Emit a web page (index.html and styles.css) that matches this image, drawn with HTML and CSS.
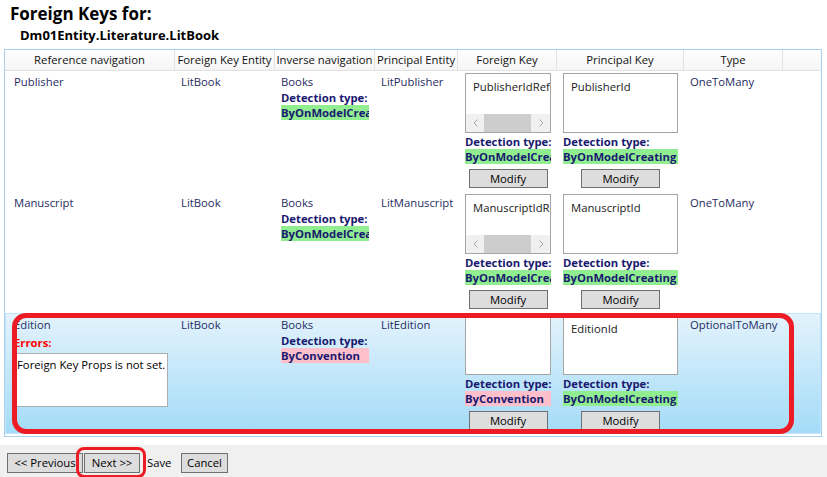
FILE: index.html
```html
<!DOCTYPE html>
<html>
<head>
<meta charset="utf-8">
<link rel="stylesheet" href="styles.css">
</head>
<body>
<div class="titles">
  <h1 class="title">Foreign Keys for:</h1>
  <h2 class="subtitle">Dm01Entity.Literature.LitBook</h2>
</div>
<div class="grid">
  <div class="cols hdr">
    <div>Reference navigation</div>
    <div>Foreign Key Entity</div>
    <div>Inverse navigation</div>
    <div>Principal Entity</div>
    <div>Foreign Key</div>
    <div>Principal Key</div>
    <div>Type</div>
    <div></div>
  </div>

  <div class="cols row">
    <div class="cell first">Publisher</div>
    <div class="cell">LitBook</div>
    <div class="cell inv">
      <div>Books</div>
      <div class="det">Detection type:</div>
      <div class="val green w-inv">ByOnModelCreating</div>
    </div>
    <div class="cell">LitPublisher</div>
    <div class="cell key fk">
      <div class="keywrap w-fk">
        <div class="listbox">
          <div class="item">PublisherIdRef</div>
          <div class="hscroll"><span class="arr"><svg width="5" height="8" viewBox="0 0 5 8"><path d="M4.5 0.5 L1 4 L4.5 7.5" fill="none" stroke="#a6a6a6" stroke-width="1"/></svg></span><span class="thumb"></span><span class="spacer"></span><span class="arr"><svg width="5" height="8" viewBox="0 0 5 8"><path d="M0.5 0.5 L4 4 L0.5 7.5" fill="none" stroke="#a6a6a6" stroke-width="1"/></svg></span></div>
        </div>
        <div class="det">Detection type:</div>
        <div class="val green">ByOnModelCreating</div>
        <button class="btn">Modify</button>
      </div>
    </div>
    <div class="cell key pk">
      <div class="keywrap w-pk">
        <div class="listbox">
          <div class="item">PublisherId</div>
        </div>
        <div class="det">Detection type:</div>
        <div class="val green">ByOnModelCreating</div>
        <button class="btn">Modify</button>
      </div>
    </div>
    <div class="cell">OneToMany</div>
    <div class="cell"></div>
  </div>

  <div class="cols row">
    <div class="cell first">Manuscript</div>
    <div class="cell">LitBook</div>
    <div class="cell inv">
      <div>Books</div>
      <div class="det">Detection type:</div>
      <div class="val green w-inv">ByOnModelCreating</div>
    </div>
    <div class="cell">LitManuscript</div>
    <div class="cell key fk">
      <div class="keywrap w-fk">
        <div class="listbox">
          <div class="item">ManuscriptIdRef</div>
          <div class="hscroll"><span class="arr"><svg width="5" height="8" viewBox="0 0 5 8"><path d="M4.5 0.5 L1 4 L4.5 7.5" fill="none" stroke="#a6a6a6" stroke-width="1"/></svg></span><span class="thumb"></span><span class="spacer"></span><span class="arr"><svg width="5" height="8" viewBox="0 0 5 8"><path d="M0.5 0.5 L4 4 L0.5 7.5" fill="none" stroke="#a6a6a6" stroke-width="1"/></svg></span></div>
        </div>
        <div class="det">Detection type:</div>
        <div class="val green">ByOnModelCreating</div>
        <button class="btn">Modify</button>
      </div>
    </div>
    <div class="cell key pk">
      <div class="keywrap w-pk">
        <div class="listbox">
          <div class="item">ManuscriptId</div>
        </div>
        <div class="det">Detection type:</div>
        <div class="val green">ByOnModelCreating</div>
        <button class="btn">Modify</button>
      </div>
    </div>
    <div class="cell">OneToMany</div>
    <div class="cell"></div>
  </div>

  <div class="cols row sel">
    <div class="cell first">
      <div>Edition</div>
      <div class="errors">Errors:</div>
      <div class="errbox">Foreign Key Props is not set.</div>
    </div>
    <div class="cell">LitBook</div>
    <div class="cell inv">
      <div>Books</div>
      <div class="det">Detection type:</div>
      <div class="val pink w-inv">ByConvention</div>
    </div>
    <div class="cell">LitEdition</div>
    <div class="cell key fk">
      <div class="keywrap w-fk">
        <div class="listbox"></div>
        <div class="det">Detection type:</div>
        <div class="val pink">ByConvention</div>
        <button class="btn">Modify</button>
      </div>
    </div>
    <div class="cell key pk">
      <div class="keywrap w-pk">
        <div class="listbox">
          <div class="item">EditionId</div>
        </div>
        <div class="det">Detection type:</div>
        <div class="val green">ByOnModelCreating</div>
        <button class="btn">Modify</button>
      </div>
    </div>
    <div class="cell">OptionalToMany</div>
    <div class="cell"></div>
  </div>
</div>

<div class="footer">
  <button class="fbtn prev">&lt;&lt; Previous</button>
  <button class="fbtn next">Next &gt;&gt;</button>
  <span class="save">Save</span>
  <button class="fbtn cancel">Cancel</button>
</div>

<div class="mark mark-row"></div>
<div class="mark mark-next"></div>
</body>
</html>
```

FILE: styles.css
```css
* { box-sizing: border-box; }
html, body { margin: 0; padding: 0; }
body {
  width: 827px;
  height: 477px;
  overflow: hidden;
  position: relative;
  background: #fff;
  font-family: "Open Sans", "Noto Sans", sans-serif;
  font-size: 11.3px;
  color: #1f2c63;
}
.titles { height: 49px; padding: 2px 0 0 10px; color: #000; }
.title { margin: 0; font-size: 17px; font-weight: 700; line-height: 23px; }
.subtitle { margin: 0 0 0 10px; font-size: 13px; font-weight: 700; line-height: 20px; }

.grid {
  margin-left: 4px;
  width: 818px;
  border: 1px solid #a9cfea;
  padding-bottom: 2px;
}
.cols {
  display: grid;
  grid-template-columns: 170px 100px 100px 83px 99px 127px 99px 1fr;
}
.hdr {
  height: 21px;
  border-bottom: 1px solid #e2e2e2;
  background: linear-gradient(#ffffff, #f5f5f5);
  color: #111;
}
.hdr > div {
  border-right: 1px solid #e2e2e2;
  text-align: center;
  line-height: 20px;
  white-space: nowrap;
  overflow: hidden;
}
.hdr > div:last-child { border-right: 0; }

.row { height: 121px; }
.row.sel {
  background: linear-gradient(#e3f3fc, #a3dbf8);
  box-shadow: inset 0 0 0 1px #c3e5f9;
}
.cell {
  padding: 3px 0 0 6px;
  line-height: 16px;
  white-space: nowrap;
  overflow: hidden;
  min-width: 0;
}
.cell.first { padding-left: 9px; }
.row.sel .cell { padding-top: 4px; }
.row.sel .cell.key { padding-top: 2px; }
.cell.key { padding: 2px 0 0 6px; }
.cell.fk { padding-left: 7px; }

.keywrap { display: flex; flex-direction: column; }
.w-fk { width: 86px; }
.w-pk { width: 115px; }
.w-inv { width: 88px; }

.listbox {
  height: 60px;
  border: 1px solid #a6a6a6;
  background: #fff;
  display: flex;
  flex-direction: column;
  overflow: hidden;
}
.item { padding: 5px 0 0 7px; line-height: 16px; color: #1a1a1a; white-space: nowrap; overflow: hidden; }
.hscroll {
  margin-top: auto;
  height: 18px;
  background: #f0f0f0;
  display: flex;
  align-items: stretch;
}
.arr { width: 18px; display: flex; align-items: center; justify-content: center; }
.thumb { width: 47px; background: #cdcdcd; }
.spacer { flex: 1; }

.det {
  font-weight: 700;
  color: #191970;
  line-height: 15px;
  margin-top: 1px;
}
.inv .det { margin-top: 0; }
.val {
  font-weight: 700;
  color: #191970;
  line-height: 15px;
  height: 15px;
  overflow: hidden;
  white-space: nowrap;
}
.green { background: #90ee90; }
.pink { background: #ffc0cb; }

.btn {
  display: block;
  margin: 5px auto 0;
  width: 79px;
  height: 19px;
  padding: 0;
  background: #dddddd;
  border: 1px solid #707070;
  font: inherit;
  color: #000;
  line-height: 17px;
  text-align: center;
}

.errors { color: #ff0000; font-weight: 700; line-height: 16px; margin-top: 2px; }
.errbox {
  margin: 2px 0 0 1px;
  width: 153px;
  height: 54px;
  border: 1px solid #abadb3;
  background: #fff;
  color: #000;
  padding: 3px 0 0 1px;
  line-height: 16px;
  white-space: nowrap;
  overflow: hidden;
}

.footer {
  margin-top: 8px;
  height: 40px;
  background: #f0f0f0;
  display: flex;
  align-items: flex-start;
  padding: 8px 0 0 7px;
  color: #000;
}
.fbtn {
  height: 20px;
  padding: 0;
  background: #dddddd;
  border: 1px solid #707070;
  font: inherit;
  color: #000;
  line-height: 18px;
  text-align: center;
}
.prev { width: 76px; }
.next { width: 56px; margin-left: 1px; }
.save { margin-left: 7px; line-height: 20px; width: 34px; }
.cancel { width: 47px; }

.mark {
  position: absolute;
  border: 5px solid #ed1c24;
  pointer-events: none;
}
.mark-row { left: 12px; top: 313px; width: 782px; height: 121px; border-radius: 14px; }
.mark-next { left: 76px; top: 447px; width: 70px; height: 31px; border-width: 3px; border-radius: 8px; }
```
